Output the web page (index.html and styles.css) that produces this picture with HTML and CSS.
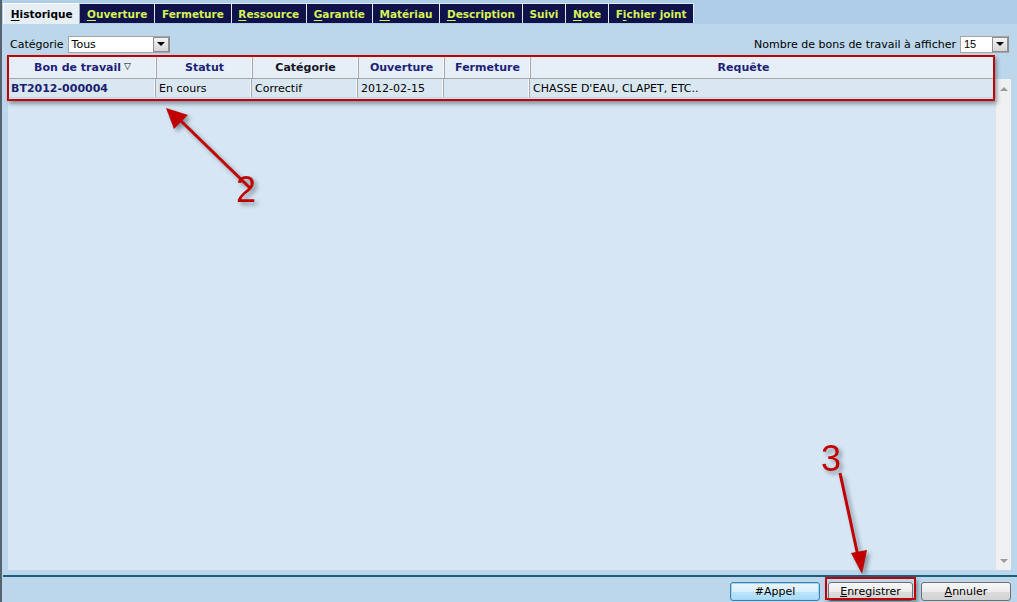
FILE: index.html
```html
<!DOCTYPE html>
<html lang="fr">
<head>
<meta charset="utf-8">
<title>Historique</title>
<link rel="stylesheet" href="styles.css">
</head>
<body>
<div class="frame">
  <nav class="tabs">
    <div class="tab active"><u>H</u>istorique</div>
    <div class="tab"><u>O</u>uverture</div>
    <div class="tab">Fermeture</div>
    <div class="tab"><u>R</u>essource</div>
    <div class="tab"><u>G</u>arantie</div>
    <div class="tab"><u>M</u>atériau</div>
    <div class="tab"><u>D</u>escription</div>
    <div class="tab">Suivi</div>
    <div class="tab"><u>N</u>ote</div>
    <div class="tab">F<u>i</u>chier joint</div>
  </nav>

  <div class="filters">
    <label class="field">Catégorie
      <span class="select cat"><span class="val">Tous</span><span class="drop"></span></span>
    </label>
    <label class="field">Nombre de bons de travail à afficher
      <span class="select num"><span class="val">15</span><span class="drop"></span></span>
    </label>
  </div>

  <section class="panel">
    <div class="thead">
      <div class="c c1">Bon de travail <span class="sort">&#9661;</span></div>
      <div class="c c2">Statut</div>
      <div class="c c3 dark">Catégorie</div>
      <div class="c c4">Ouverture</div>
      <div class="c c5">Fermeture</div>
      <div class="c c6">Requête</div>
    </div>
    <div class="tbody">
      <div class="rows">
        <div class="row">
          <div class="c c1 id">BT2012-000004</div>
          <div class="c c2">En cours</div>
          <div class="c c3">Correctif</div>
          <div class="c c4">2012-02-15</div>
          <div class="c c5"></div>
          <div class="c c6">CHASSE D'EAU, CLAPET, ETC..</div>
        </div>
      </div>
      <div class="scroll"><span class="up"></span><span class="down"></span></div>
    </div>
  </section>

  <footer class="actions">
    <button class="btn default">#Appel</button>
    <button class="btn"><u>E</u>nregistrer</button>
    <button class="btn"><u>A</u>nnuler</button>
  </footer>

  <div class="mark mark-table"></div>
  <div class="mark mark-save"></div>
  <svg class="notes" width="1017" height="602" viewBox="0 0 1017 602">
    <g class="arrow">
      <line x1="250" y1="188" x2="180" y2="120"/>
      <polygon points="166,108 188,115 174,129"/>
      <line x1="840" y1="473" x2="858" y2="556"/>
      <polygon points="862,574 851,553 867,550"/>
    </g>
    <text x="236" y="202" class="num">2</text>
    <text x="821" y="471" class="num">3</text>
  </svg>
</div>
</body>
</html>
```

FILE: styles.css
```css
* { box-sizing: border-box; }
html, body { margin: 0; padding: 0; }
body {
  width: 1017px;
  height: 602px;
  overflow: hidden;
  background: #bcd7ec;
  font-family: "DejaVu Sans", Verdana, sans-serif;
  font-size: 11px;
  color: #000;
}
.frame {
  position: relative;
  width: 1017px;
  height: 602px;
  border-left: 2px solid #56626e;
  display: flex;
  flex-direction: column;
}

/* tabs */
.tabs {
  display: flex;
  padding: 3px 0 0 1px;
  height: 24px;
  background: #aecde8;
}
.tab {
  height: 20px;
  padding: 0 6.75px;
  display: flex;
  align-items: center;
  font-weight: bold;
  font-size: 10.5px;
  color: #d6f05a;
  background: #10124a;
  border: 1px solid #e4e8f0;
  border-bottom: none;
  border-left: none;
  white-space: nowrap;
}
.tab u { text-decoration-thickness: 1px; text-underline-offset: 2px; }
.tab.active {
  height: 21px;
  color: #000;
  background: #e6eff7;
  border-left: 1px solid #fff;
  border-top: 1px solid #fff;
  border-right: 1px solid #9aa6b2;
}

/* filters */
.filters {
  display: flex;
  justify-content: space-between;
  align-items: center;
  padding: 0 8px 0 8px;
  margin-top: 12px;
  height: 17px;
}
.field { display: flex; align-items: center; gap: 4px; }
.select {
  display: flex;
  height: 17px;
  background: #fff;
  border: 1px solid #a5a5a5;
  border-right-color: #8c8c8c;
}
.select.cat { width: 102px; }
.select.num { width: 49px; }
.select .val { flex: 1; padding-left: 3px; line-height: 15px; font-size: 11px; }
.select .drop {
  width: 16px;
  height: 15px;
  background: linear-gradient(#f4f4f4, #d6d6d6);
  border: 1px solid #8e8e8e;
  position: relative;
}
.select .drop::after {
  content: "";
  position: absolute;
  left: 3px;
  top: 4px;
  border-left: 4px solid transparent;
  border-right: 4px solid transparent;
  border-top: 4px solid #000;
}

/* grid panel */
.panel {
  margin: 4px 0 0 6px;
  width: 1003px;
  height: 513px;
  display: flex;
  flex-direction: column;
}
.thead {
  display: flex;
  height: 22px;
  margin-right: 18px;
  margin-left: 1px;
  background: #e6eef7;
  border-bottom: 1px solid #a4a4a4;
}
.thead .c {
  justify-content: center;
  font-weight: bold;
  color: #1d1f7a;
}
.thead .c.dark { color: #141428; }
.sort { font-size: 9px; font-weight: normal; color: #000; position: relative; top: -2px; margin-left: 3px; }
.c {
  display: flex;
  align-items: center;
  border-right: 1px solid #a8a8a8;
  box-shadow: inset -1px 0 0 #f4f8fc;
  padding: 0 3px;
  white-space: nowrap;
  overflow: hidden;
}
.c1 { width: 148px; }
.c2 { width: 96px; }
.c3 { width: 106px; }
.c4 { width: 86px; }
.c5 { width: 86px; }
.c6 { flex: 1; border-right: none; box-shadow: none; }
.thead .c6 { padding-right: 40px; }
.tbody {
  flex: 1;
  display: flex;
  background: #d6e6f4;
}
.rows { flex: 1; }
.row {
  display: flex;
  height: 19px;
  background: #d9e7f3;
  border-bottom: 1px solid #c2d2e0;
  margin-right: 2px;
}
.row .c.id { font-weight: bold; color: #1d1f6e; }
.scroll {
  width: 16px;
  background: #eef0f2;
  border-left: 1px solid #e0e4e8;
  position: relative;
}
.scroll .up, .scroll .down {
  position: absolute;
  left: 4px;
  border-left: 4px solid transparent;
  border-right: 4px solid transparent;
}
.scroll .up { top: 8px; border-bottom: 4px solid #9a9a9a; }
.scroll .down { bottom: 7px; border-top: 4px solid #9a9a9a; }

/* footer */
.actions {
  margin-top: 5px;
  border-top: 2px solid #1b5f7c;
  display: flex;
  justify-content: flex-end;
  gap: 8px;
  padding: 5px 6px 0 0;
  margin-left: 1px;
}
.btn {
  width: 90px;
  height: 19px;
  padding: 0;
  font-family: "DejaVu Sans", Verdana, sans-serif;
  font-size: 11px;
  color: #000;
  background: linear-gradient(#f8f8f8 0%, #ececec 50%, #dcdcdc 51%, #d2d2d2 100%);
  border: 1px solid #707070;
  border-radius: 3px;
}
.btn:nth-child(2) { width: 85px; }
.btn.default {
  border-color: #3c7fb1;
  background: linear-gradient(#eaf6fd 0%, #d9f0fc 50%, #bee6fd 51%, #a7d9f5 100%);
  box-shadow: inset 0 0 0 1px #9fd6f5;
}

/* annotations */
.mark {
  position: absolute;
  border: 2px solid #c00000;
  box-shadow: 2px 3px 4px rgba(40, 50, 60, 0.45);
}
.mark-table { left: 5px; top: 55px; width: 988px; height: 46px; }
.mark-save { left: 823px; top: 577px; width: 91px; height: 23px; }
.notes {
  position: absolute;
  left: -2px;
  top: 0;
  pointer-events: none;
  filter: drop-shadow(3px 3px 2px rgba(40, 50, 60, 0.45));
}
.arrow line { stroke: #c00000; stroke-width: 3; }
.arrow polygon { fill: #c00000; }
.num {
  font-family: "Liberation Sans", Arial, sans-serif;
  font-size: 36px;
  fill: #c00000;
}
```
